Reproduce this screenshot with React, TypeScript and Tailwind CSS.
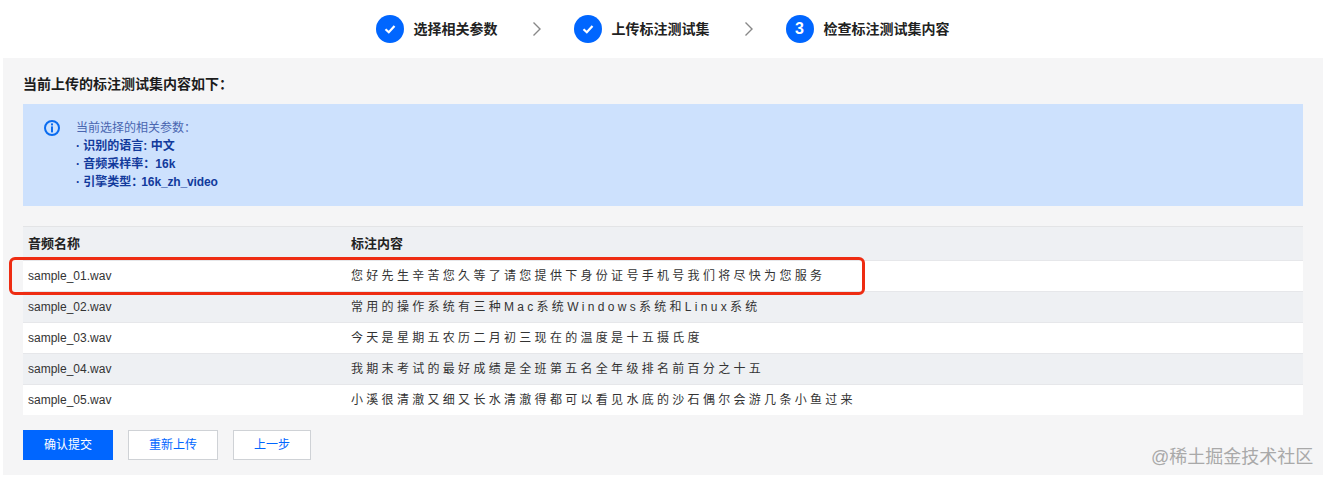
import React from 'react';

const font = "font-['Liberation_Sans','Noto_Sans_CJK_SC',sans-serif]";

const rows = [
  { name: 'sample_01.wav', text: '您好先生辛苦您久等了请您提供下身份证号手机号我们将尽快为您服务' },
  { name: 'sample_02.wav', text: '常用的操作系统有三种Mac系统Windows系统和Linux系统' },
  { name: 'sample_03.wav', text: '今天是星期五农历二月初三现在的温度是十五摄氏度' },
  { name: 'sample_04.wav', text: '我期末考试的最好成绩是全班第五名全年级排名前百分之十五' },
  { name: 'sample_05.wav', text: '小溪很清澈又细又长水清澈得都可以看见水底的沙石偶尔会游几条小鱼过来' },
];

const CheckCircle = () => (
  <span className="flex h-7 w-7 items-center justify-center rounded-full bg-[#0066ff]">
    <svg width="14" height="14" viewBox="0 0 14 14" fill="none">
      <path d="M2.5 7.2 5.8 10.3 11.5 4" stroke="#fff" strokeWidth="2.2" />
    </svg>
  </span>
);

const Chevron = () => (
  <svg className="mx-[33px]" width="10" height="16" viewBox="0 0 10 16" fill="none">
    <path d="M2.5 1.5 9 8 2.5 14.5" stroke="#888" strokeWidth="1.4" />
  </svg>
);

export default function App() {
  return (
    <div className={`relative h-[483px] w-[1328px] overflow-hidden bg-white ${font}`}>
      <div className="flex h-[58px] items-center justify-center pr-[3px]">
        <CheckCircle />
        <span className="ml-2.5 text-sm font-semibold text-[#222]">选择相关参数</span>
        <Chevron />
        <CheckCircle />
        <span className="ml-2.5 text-sm font-semibold text-[#222]">上传标注测试集</span>
        <Chevron />
        <span className="flex h-7 w-7 items-center justify-center rounded-full bg-[#0066ff] text-base font-bold text-white">3</span>
        <span className="ml-2.5 text-sm font-semibold text-[#222]">检查标注测试集内容</span>
      </div>

      <div className="ml-[3px] h-[417px] w-[1320px] bg-[#f5f5f6] px-5 pt-4">
        <h2 className="text-sm font-semibold leading-[20px] text-[#1c1c1c]">当前上传的标注测试集内容如下：</h2>

        <div className="mt-2.5 flex h-[102px] bg-[#cde1fd] pl-[21px] pt-[15px]">
          <svg className="mt-[1px]" width="16" height="16" viewBox="0 0 16 16" fill="none">
            <circle cx="8" cy="8" r="7" stroke="#0a6cf0" strokeWidth="2" />
            <rect x="7" y="3.4" width="2" height="2" fill="#0a6cf0" />
            <rect x="7" y="6.4" width="2" height="6" fill="#0a6cf0" />
          </svg>
          <div className="ml-4 text-xs leading-[18px] text-[#123a9c]">
            <p className="text-[#4a66b0]">当前选择的相关参数：</p>
            <p className="font-semibold">· 识别的语言: 中文</p>
            <p className="font-semibold">· 音频采样率：16k</p>
            <p className="font-semibold">· 引擎类型：<span className="-ml-0.5 tracking-[-0.15px]">16k_zh_video</span></p>
          </div>
        </div>

        <div className="mt-5 border-t border-[#e3e4e6]">
          <div className="flex h-[33px] items-center bg-[#eef0f3] pl-[5px] text-[13px] font-semibold text-[#222]">
            <span className="w-[323px]">音频名称</span>
            <span>标注内容</span>
          </div>
          {rows.map((row, i) => (
            <div
              key={row.name}
              className={`flex h-[31px] items-center border-t border-[#e6e7ea] pl-[5px] text-xs text-[#333] ${i % 2 === 0 ? 'bg-white' : 'bg-[#eef0f3]'}`}
            >
              <span className="w-[323px]">{row.name}</span>
              <span className="tracking-[3.3px]">{row.text}</span>
            </div>
          ))}
        </div>

        <div className="mt-[15px] flex gap-[15px] text-xs">
          <button className="h-[30px] w-[90px] bg-[#0066ff] text-white">确认提交</button>
          <button className="h-[30px] w-[90px] border border-[#cfd2d6] bg-white text-[#0066ff]">重新上传</button>
          <button className="h-[30px] w-[78px] border border-[#cfd2d6] bg-white text-[#0066ff]">上一步</button>
        </div>
      </div>

      <div className="absolute left-[9px] top-[257px] h-[38px] w-[856px] rounded-[6px] border-[3px] border-[#ee2c12]" />
      <div className="absolute left-[1151px] top-[446px] text-[18px] leading-[22px] text-[#a9a9a9]">@稀土掘金技术社区</div>
    </div>
  );
}
